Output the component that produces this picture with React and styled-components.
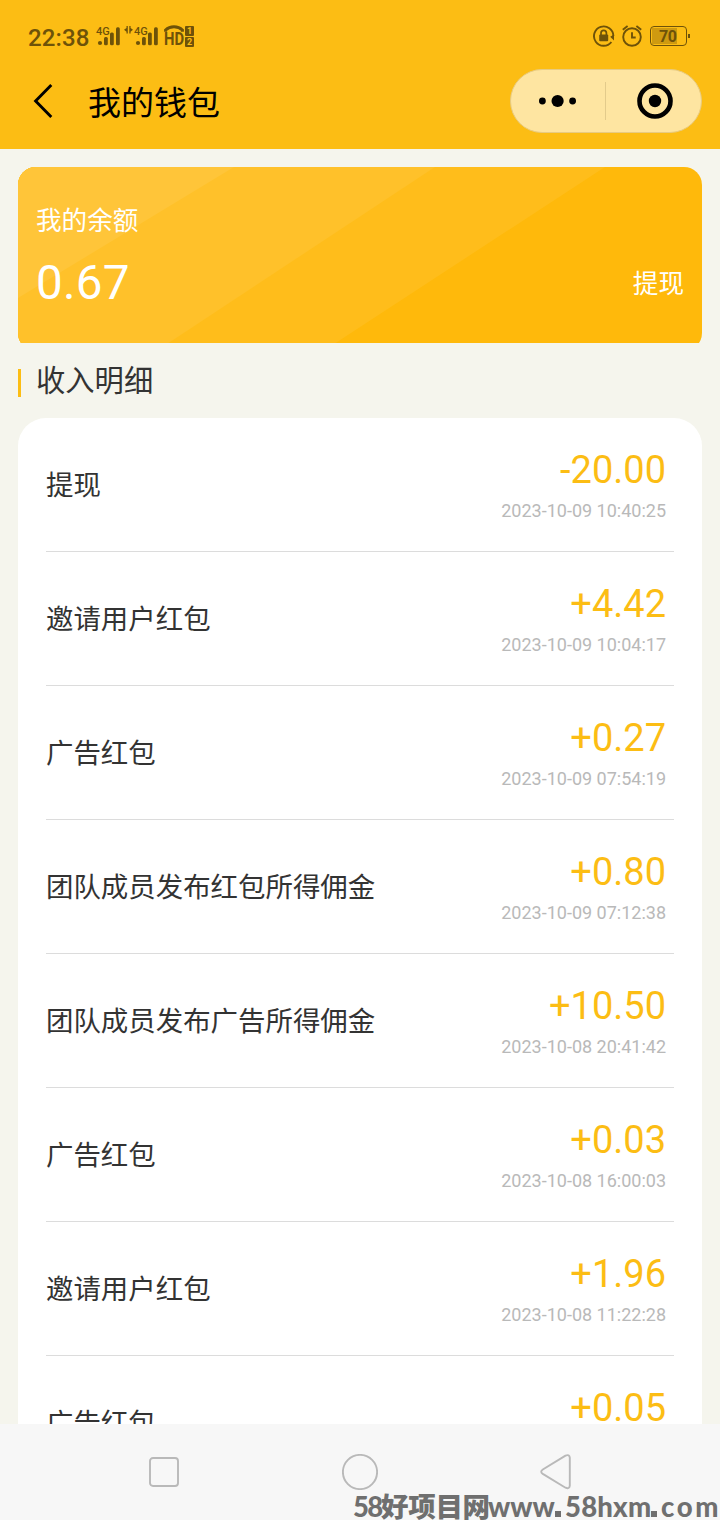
import styled, { createGlobalStyle } from 'styled-components';

const GlobalStyle = createGlobalStyle`
  * {
    box-sizing: border-box;
    margin: 0;
    padding: 0;
  }
  body {
    background: #f5f5ed;
    font-family: Roboto, 'Noto Sans CJK SC', sans-serif;
    color: #333;
  }
`

const records = [
  { title: '提现', amount: '-20.00', time: '2023-10-09 10:40:25' },
  { title: '邀请用户红包', amount: '+4.42', time: '2023-10-09 10:04:17' },
  { title: '广告红包', amount: '+0.27', time: '2023-10-09 07:54:19' },
  { title: '团队成员发布红包所得佣金', amount: '+0.80', time: '2023-10-09 07:12:38' },
  { title: '团队成员发布广告所得佣金', amount: '+10.50', time: '2023-10-08 20:41:42' },
  { title: '广告红包', amount: '+0.03', time: '2023-10-08 16:00:03' },
  { title: '邀请用户红包', amount: '+1.96', time: '2023-10-08 11:22:28' },
  { title: '广告红包', amount: '+0.05', time: '' },
]

function Signal() {
  return (
    <SignalBox>
      <small>4G</small>
      <svg width="24" height="20" viewBox="0 0 24 20" fill="#6e5209">
        <circle cx="4" cy="16" r="2.1" />
        <rect x="8" y="10" width="3.8" height="8.3" rx="1.5" />
        <rect x="14" y="5.6" width="3.8" height="12.7" rx="1.5" />
        <rect x="20" y="0.3" width="3.8" height="18" rx="1.5" />
      </svg>
    </SignalBox>
  )
}

function StatusBar() {
  return (
    <Status>
      <Clock>22:38</Clock>
      <Signal />
      <DataArrows width="14" height="8" viewBox="0 0 14 8" fill="#6e5209">
        <path d="M4.8 0v7.5H3.5V5.7L1 3.8 3.5 1.9V0zM6.3 0v7.5h1.3V5.7L10 3.8 7.6 1.9V0z" />
      </DataArrows>
      <Signal />
      <HdBox>
        <svg width="20" height="8" viewBox="0 0 20 8" fill="none" stroke="#6e5209" strokeWidth="3">
          <path d="M1.6 6.8V5C6 .7 14 .7 18.4 5v1.8" />
        </svg>
        <b>HD</b>
        <Sims><i>1</i><i>2</i></Sims>
      </HdBox>
      <StatusRight>
        <svg width="22" height="22" viewBox="0 0 22 22">
          <path d="M18.4 17A9.7 9.7 0 1 1 20.4 11" fill="none" stroke="#6e5209" strokeWidth="1.9" />
          <path d="M17.2 11.8 21 9.5v6z" fill="#6e5209" />
          <rect x="6.2" y="9.5" width="9" height="6.8" rx="1" fill="#6e5209" />
          <path d="M8 10V8a2.7 2.7 0 0 1 5.4 0v2" fill="none" stroke="#6e5209" strokeWidth="1.7" />
        </svg>
        <svg width="20" height="22" viewBox="0 0 20 22" fill="none" stroke="#6e5209" strokeWidth="1.9">
          <circle cx="10" cy="12" r="8.8" />
          <path d="M10 7.2v5.3h3.7M.8 4.8 5.6 1M19.2 4.8 14.4 1" />
        </svg>
        <Battery><span>70</span></Battery>
      </StatusRight>
    </Status>
  )
}

function App() {
  return (
    <Page>
      <GlobalStyle />
      <Header>
        <StatusBar />
        <NavBar>
          <svg width="22" height="36" viewBox="0 0 22 36" fill="none" stroke="#000" strokeWidth="2.9">
            <path d="M18.3 2 2.6 18l15.7 16" />
          </svg>
          <h1>我的钱包</h1>
          <Capsule>
            <svg width="38" height="14" viewBox="0 0 38 14">
              <circle cx="3.4" cy="7" r="3.4" />
              <circle cx="18.6" cy="7" r="6.1" />
              <circle cx="33.6" cy="7" r="3.4" />
            </svg>
            <Divider />
            <svg width="36" height="36" viewBox="0 0 36 36">
              <circle cx="18" cy="18" r="15.5" fill="none" stroke="#000" strokeWidth="4.6" />
              <circle cx="18" cy="18" r="6.2" />
            </svg>
          </Capsule>
        </NavBar>
      </Header>

      <Main>
        <BalanceClip>
          <BalanceCard>
            <Stripes width="684" height="181" viewBox="0 0 684 181">
              <path d="M0 0h587L310 181H0z" fill="#ffbd1b" />
              <path d="M0 0h417L143 181H0z" fill="#ffc12a" />
              <path d="M0 0h216L0 131z" fill="#ffc539" />
            </Stripes>
            <BalanceText>
              <p>我的余额</p>
              <strong>0.67</strong>
            </BalanceText>
            <Withdraw>提现</Withdraw>
          </BalanceCard>
        </BalanceClip>

        <SectionTitle>收入明细</SectionTitle>

        <List>
          {records.map((item, index) => (
            <Row key={index}>
              <RowTitle>{item.title}</RowTitle>
              <RowInfo>
                <Amount>{item.amount}</Amount>
                <Time>{item.time}</Time>
              </RowInfo>
            </Row>
          ))}
        </List>
      </Main>

      <SystemBar>
        <svg width="30" height="30" viewBox="0 0 30 30">
          <rect x="1" y="1" width="28" height="28" rx="3" />
        </svg>
        <svg width="36" height="36" viewBox="0 0 36 36">
          <circle cx="18" cy="18" r="17.1" />
        </svg>
        <svg width="32" height="36" viewBox="0 0 32 36">
          <path d="M25.5 1.6 2.8 15.5q-3.2 2.2 0 4.4l22.7 13.8q4 1.6 4.3-2V3.7q-.3-3.6-4.3-2.1z" />
        </svg>
        <SiteMark>
          <MarkText $width={28} $spacing={-1.8}>58</MarkText>
          <MarkText $width={107} $spacing={-0.3}>好项目网</MarkText>
          <MarkText $width={65} $spacing={0}>www</MarkText>
          <Dot />
          <MarkText $width={84} $spacing={0.2}>58hxm</MarkText>
          <Dot />
          <MarkText $width={60} $spacing={2.6}>com</MarkText>
        </SiteMark>
      </SystemBar>
    </Page>
  )
}

export default App

const Page = styled.div`
  width: 720px;
  height: 1520px;
  display: flex;
  flex-direction: column;
  overflow: hidden;
`

const Header = styled.header`
  height: 149px;
  flex-shrink: 0;
  background: #fcbd14;
`

const Status = styled.div`
  height: 69px;
  display: flex;
  align-items: center;
  padding: 4px 33px 0 28px;
  color: #6e5209;
`

const Clock = styled.span`
  width: 68px;
  padding-top: 3px;
  font-size: 24px;
  font-weight: 500;
  letter-spacing: 0.1px;
`

const SignalBox = styled.div`
  position: relative;
  height: 20px;
  small {
    position: absolute;
    left: 0;
    top: -1px;
    font-size: 11px;
    line-height: 12px;
    font-weight: 500;
  }
`

const DataArrows = styled.svg`
  margin: -14px 0 0 3px;
  & + div {
    margin-left: -3px;
  }
`

const HdBox = styled.div`
  position: relative;
  width: 30px;
  height: 22px;
  margin: -2px 0 0 6px;
  display: flex;
  align-items: flex-end;
  svg {
    position: absolute;
    left: 0;
    top: 0;
  }
  b {
    font-size: 18.5px;
    line-height: 15px;
    width: 21px;
    transform: scaleX(0.8);
    transform-origin: left;
  }
`

const Sims = styled.div`
  display: flex;
  flex-direction: column;
  gap: 1px;
  i {
    width: 9px;
    height: 10px;
    border-radius: 1px;
    background: #6e5209;
    color: #fcbd14;
    font: bold 9px/10px Roboto, sans-serif;
    text-align: center;
  }
`

const StatusRight = styled.div`
  margin-left: auto;
  margin-top: -1px;
  display: flex;
  align-items: center;
  gap: 8px;
  > svg:first-child {
    margin-right: -1px;
  }
`

const Battery = styled.div`
  position: relative;
  width: 37px;
  height: 20px;
  border: 1.5px solid #6e5209;
  border-radius: 4px;
  padding: 1px;
  span {
    display: block;
    width: 25px;
    height: 16px;
    padding-left: 7px;
    background: #cf9a10;
    font-size: 16px;
    line-height: 17px;
    font-weight: 700;
    letter-spacing: -0.4px;
  }
  &::after {
    content: '';
    position: absolute;
    right: -4px;
    top: 7px;
    width: 2px;
    height: 4px;
    background: #6e5209;
  }
`

const NavBar = styled.div`
  height: 64px;
  display: flex;
  align-items: center;
  padding: 0 18px 0 33px;
  h1 {
    margin-left: 33px;
    padding-top: 5px;
    font-size: 33px;
    line-height: 40px;
    font-weight: 400;
    color: #000;
  }
`

const Capsule = styled.div`
  width: 192px;
  height: 64px;
  margin-left: auto;
  padding: 0 28px;
  display: flex;
  align-items: center;
  justify-content: space-between;
  border: 1px solid #e8cb82;
  border-radius: 32px;
  background: #fee5a1;
`

const Divider = styled.span`
  width: 1px;
  height: 38px;
  margin-right: 3px;
  background: #e3cb8b;
`

const Main = styled.main`
  flex: 1;
  min-height: 0;
  padding: 18px 18px 0;
  overflow: hidden;
`

// the card is a little taller than its holder, so the lower corners are cut
const BalanceClip = styled.div`
  height: 176px;
  overflow: hidden;
`

const BalanceCard = styled.section`
  position: relative;
  height: 184px;
  display: flex;
  justify-content: space-between;
  padding: 0 18px;
  border-radius: 18px;
  overflow: hidden;
  background: #ffb90b;
  color: #fff;
`

const Stripes = styled.svg`
  position: absolute;
  left: 0;
  top: 0;
`

const BalanceText = styled.div`
  position: relative;
  padding-top: 36px;
  p {
    font-size: 25.6px;
    line-height: 36px;
  }
  strong {
    display: block;
    margin-top: 16px;
    font-size: 47.6px;
    line-height: 56px;
    font-weight: 400;
    letter-spacing: 0.2px;
  }
`

const Withdraw = styled.span`
  position: relative;
  padding-top: 99px;
  font-size: 25.6px;
  line-height: 36px;
`

const SectionTitle = styled.h2`
  height: 75px;
  display: flex;
  align-items: center;
  padding-bottom: 5px;
  font-size: 29.3px;
  font-weight: 400;
  &::before {
    content: '';
    width: 3px;
    height: 28px;
    margin: 10px 15px 0 0;
    background: #fcbd14;
  }
`

const List = styled.ul`
  padding: 0 28px;
  border-radius: 28px 28px 0 0;
  background: #fff;
  list-style: none;
`

const Row = styled.li`
  height: 134px;
  display: flex;
  align-items: center;
  justify-content: space-between;
  padding-right: 8px;
  border-bottom: 1px solid #dcdcdc;
`

const RowTitle = styled.span`
  padding-bottom: 4px;
  font-size: 27.45px;
`

const RowInfo = styled.div`
  text-align: right;
  padding-top: 1px;
`

const Amount = styled.p`
  font-size: 38px;
  line-height: 46px;
  color: #fcbd14;
`

const Time = styled.p`
  height: 24px;
  margin-top: 6px;
  font-size: 18px;
  line-height: 24px;
  color: #b9b9b9;
`

const SystemBar = styled.footer`
  position: relative;
  height: 96px;
  flex-shrink: 0;
  display: flex;
  align-items: center;
  justify-content: space-between;
  padding: 0 148px 0 149px;
  background: #f7f7f7;
  > svg {
    fill: none;
    stroke: #b9b9b9;
    stroke-width: 1.9px;
  }
`

const SiteMark = styled.div`
  position: absolute;
  left: 353px;
  bottom: -3px;
  display: flex;
  align-items: baseline;
  color: #6f6f6f;
  font: 900 27.5px/32px Lato, 'Noto Sans CJK SC', sans-serif;
  white-space: nowrap;
`

const MarkText = styled.span`
  width: ${(props) => props.$width}px;
  letter-spacing: ${(props) => props.$spacing}px;
`

const Dot = styled.i`
  width: 6px;
  height: 6px;
  margin: 0 4px 0 2px;
  background: #6f6f6f;
`
